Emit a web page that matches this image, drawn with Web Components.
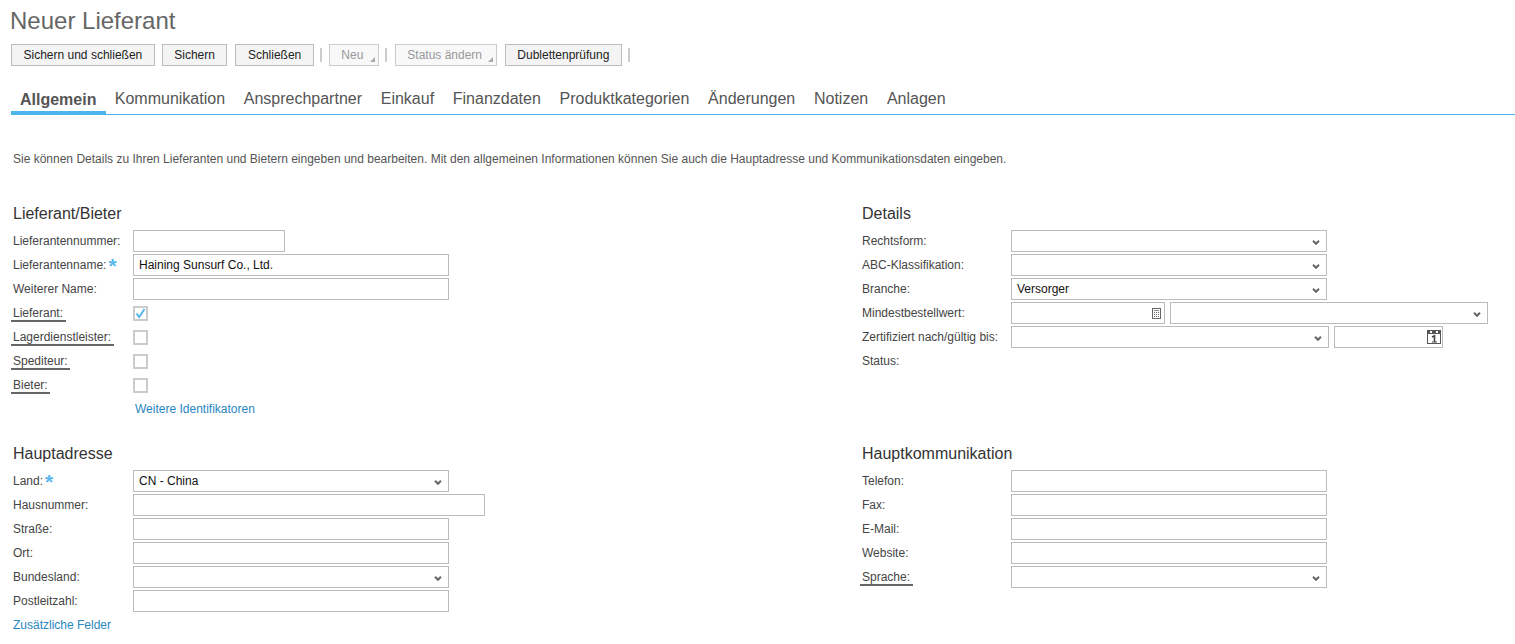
<!DOCTYPE html>
<html lang="de">
<head>
<meta charset="utf-8">
<title>Neuer Lieferant</title>
<style>
  html, body { margin: 0; background: #fff; overflow: hidden; }
  body { font: 12px "Liberation Sans", Arial, sans-serif; color: #444; }
</style>
</head>
<body>
<supplier-page>
  <tool-bar>
    <tool-button>Sichern und schließen</tool-button>
    <tool-button>Sichern</tool-button>
    <tool-button style="margin-left:1px">Schließen</tool-button>
    <tool-sep></tool-sep>
    <tool-button disabled menu style="--w:50px">Neu</tool-button>
    <tool-sep></tool-sep>
    <tool-button disabled menu style="--w:102px;margin-left:1px">Status ändern</tool-button>
    <tool-button style="margin-left:1px">Dublettenprüfung</tool-button>
    <tool-sep></tool-sep>
  </tool-bar>
  <tab-strip>
    <tab-item active>Allgemein</tab-item>
    <tab-item>Kommunikation</tab-item>
    <tab-item>Ansprechpartner</tab-item>
    <tab-item>Einkauf</tab-item>
    <tab-item>Finanzdaten</tab-item>
    <tab-item>Produktkategorien</tab-item>
    <tab-item>Änderungen</tab-item>
    <tab-item>Notizen</tab-item>
    <tab-item>Anlagen</tab-item>
  </tab-strip>
  <p slot="intro">Sie können Details zu Ihren Lieferanten und Bietern eingeben und bearbeiten. Mit den allgemeinen Informationen können Sie auch die Hauptadresse und Kommunikationsdaten eingeben.</p>

  <form-section slot="left-top" heading="Lieferant/Bieter" style="--label:120px">
    <form-row label="Lieferantennummer:"><text-box style="--w:152px"></text-box></form-row>
    <form-row label="Lieferantenname:" required><text-box value="Haining Sunsurf Co., Ltd."></text-box></form-row>
    <form-row label="Weiterer Name:"><text-box></text-box></form-row>
    <form-row label="Lieferant:" marked><check-box checked></check-box></form-row>
    <form-row label="Lagerdienstleister:" marked><check-box></check-box></form-row>
    <form-row label="Spediteur:" marked><check-box></check-box></form-row>
    <form-row label="Bieter:" marked><check-box></check-box></form-row>
    <form-row><link-text>Weitere Identifikatoren</link-text></form-row>
  </form-section>

  <form-section slot="right-top" heading="Details" style="--label:149px">
    <form-row label="Rechtsform:"><select-box></select-box></form-row>
    <form-row label="ABC-Klassifikation:"><select-box></select-box></form-row>
    <form-row label="Branche:"><select-box value="Versorger"></select-box></form-row>
    <form-row label="Mindestbestellwert:">
      <text-box style="--w:154px" icon="calc"></text-box>
      <select-box style="--w:318px"></select-box>
    </form-row>
    <form-row label="Zertifiziert nach/gültig bis:">
      <select-box style="--w:318px"></select-box>
      <text-box style="--w:109px" icon="date"></text-box>
    </form-row>
    <form-row label="Status:"></form-row>
  </form-section>

  <form-section slot="left-bottom" heading="Hauptadresse" style="--label:120px">
    <form-row label="Land:" required><select-box value="CN - China"></select-box></form-row>
    <form-row label="Hausnummer:"><text-box style="--w:352px"></text-box></form-row>
    <form-row label="Straße:"><text-box></text-box></form-row>
    <form-row label="Ort:"><text-box></text-box></form-row>
    <form-row label="Bundesland:"><select-box></select-box></form-row>
    <form-row label="Postleitzahl:"><text-box></text-box></form-row>
    <form-row flush><link-text>Zusätzliche Felder</link-text></form-row>
  </form-section>

  <form-section slot="right-bottom" heading="Hauptkommunikation" style="--label:149px">
    <form-row label="Telefon:"><text-box></text-box></form-row>
    <form-row label="Fax:"><text-box></text-box></form-row>
    <form-row label="E-Mail:"><text-box></text-box></form-row>
    <form-row label="Website:"><text-box></text-box></form-row>
    <form-row label="Sprache:" marked><select-box></select-box></form-row>
  </form-section>
</supplier-page>

<script>
// small helper, every element just sets its own shadow html once
function shadow(el, html) {
  el.attachShadow({ mode: 'open' });
  el.shadowRoot.innerHTML = html;
}

const CHEVRON = `<svg width="8" height="5" viewBox="0 0 8 5"><path d="M1 .8 L4 3.8 L7 .8" fill="none" stroke="#666" stroke-width="2"/></svg>`;

const ICONS = {
  calc: `<svg width="9" height="11" viewBox="0 0 9 11" style="margin-right:2px">
      <rect x=".5" y=".5" width="8" height="10" fill="#fff" stroke="#666"/>
      <rect x="2" y="2" width="5" height="1" fill="#888"/>
      <path d="M2 4.5h1M4 4.5h1M6 4.5h1M2 6.5h1M4 6.5h1M6 6.5h1M2 8.5h1M4 8.5h1M6 8.5h1" stroke="#666" stroke-width="1"/>
    </svg>`,
  date: `<svg width="14" height="14" viewBox="0 0 14 14">
      <rect x=".5" y=".5" width="13" height="13" fill="#fff" stroke="#555"/>
      <rect x="1" y="1" width="12" height="3" fill="#555"/>
      <rect x="3" y="1" width="2" height="2" fill="#fff"/>
      <rect x="9" y="1" width="2" height="2" fill="#fff"/>
      <path d="M5 7 L7.5 5.8 V12" fill="none" stroke="#444" stroke-width="1.6"/>
      <path d="M5 12 H10" fill="none" stroke="#444" stroke-width="1"/>
    </svg>`
};

class SupplierPage extends HTMLElement {
  connectedCallback() {
    shadow(this, `
      <style>
        :host { display: block; }
        h1 { margin: 0; padding: 7px 0 0 10px; font: 400 24px/27px "Liberation Sans", Arial, sans-serif; color: #666; }
        .intro { padding: 37px 13px 0; height: 85px; box-sizing: border-box; }
        .intro ::slotted(p) { margin: 0; font-size: 12px; line-height: 14px; color: #555; }
        .grid { display: grid; grid-template-columns: 849px 1fr; padding-left: 13px; grid-template-rows: 240px auto; }
      </style>
      <h1>Neuer Lieferant</h1>
      <slot></slot>
      <div class="intro"><slot name="intro"></slot></div>
      <div class="grid">
        <slot name="left-top"></slot>
        <slot name="right-top"></slot>
        <slot name="left-bottom"></slot>
        <slot name="right-bottom"></slot>
      </div>`);
  }
}

class ToolBar extends HTMLElement {
  connectedCallback() {
    shadow(this, `
      <style>
        :host { display: flex; align-items: center; gap: 7px; padding: 10px 0 0 11px; height: 22px; }
      </style>
      <slot></slot>`);
  }
}

class ToolButton extends HTMLElement {
  connectedCallback() {
    const disabled = this.hasAttribute('disabled');
    const menu = this.hasAttribute('menu');
    shadow(this, `
      <style>
        :host { display: block; position: relative; box-sizing: border-box; height: 22px; width: var(--w, auto);
          padding: 0 11.5px; border: 1px solid ${disabled ? '#ccc' : '#bbb'}; background: ${disabled ? '#f8f8f8' : '#f4f4f4'};
          font-size: 12px; line-height: 20px; white-space: nowrap; color: ${disabled ? '#999' : '#222'}; }
        i { position: absolute; right: 3px; bottom: 3px; width: 0; height: 0;
          border-left: 5px solid transparent; border-bottom: 5px solid #aaa; }
      </style>
      <slot></slot>${menu ? '<i></i>' : ''}`);
  }
}

class ToolSep extends HTMLElement {
  connectedCallback() {
    shadow(this, `<style>:host { display: block; width: 2px; height: 14px; background: #ccc; margin: 0 -.5px; }</style>`);
  }
}

class TabStrip extends HTMLElement {
  connectedCallback() {
    shadow(this, `
      <style>
        :host { display: flex; gap: 18.7px; margin: 14px 0 0 11px; height: 35px; box-sizing: border-box; border-bottom: 1px solid #4db5ee; }
      </style>
      <slot></slot>`);
  }
}

class TabItem extends HTMLElement {
  connectedCallback() {
    const active = this.hasAttribute('active');
    shadow(this, `
      <style>
        :host { display: block; box-sizing: border-box; height: 35px; padding-top: 9px;
          font-size: 16px; line-height: 19px; color: #555; white-space: nowrap; }
        :host([active]) { font-weight: 700; padding: 10px 9.6px 0 9px; margin-right: -10px; border-bottom: 4px solid #4db5ee; }
      </style>
      <slot></slot>`);
    if (active) this.setAttribute('aria-selected', 'true');
  }
}

class FormSection extends HTMLElement {
  connectedCallback() {
    shadow(this, `
      <style>
        :host { display: block; }
        h2 { margin: 0; height: 30px; font: 400 16px/18px "Liberation Sans", Arial, sans-serif; color: #333; padding-top: 5px; box-sizing: border-box; }
        .rows { display: flex; flex-direction: column; }
      </style>
      <h2>${this.getAttribute('heading')}</h2>
      <div class="rows"><slot></slot></div>`);
  }
}

class FormRow extends HTMLElement {
  connectedCallback() {
    const label = this.getAttribute('label');
    const star = this.hasAttribute('required') ? '<b>*</b>' : '';
    const flush = this.hasAttribute('flush');
    shadow(this, `
      <style>
        :host { display: flex; height: 24px; align-items: flex-start; }
        .lab { flex: none; width: ${flush ? '0' : 'var(--label)'}; font-size: 12px; line-height: 22px; color: #444; white-space: nowrap; }
        .txt { display: inline-block; }
        :host([marked]) .txt { margin-left: -2px; padding: 0 2.5px 0 2px; line-height: 22px; height: 18px; border-bottom: 2px solid #666; }
        b { color: #5ab7ee; font: 700 21px/0 "Liberation Sans", Arial, sans-serif; margin-left: 2px; position: relative; top: 4px; }
        .ctl { display: flex; gap: 5px; }
      </style>
      <div class="lab"><span class="txt">${label || ''}</span>${star}</div>
      <div class="ctl"><slot></slot></div>`);
  }
}

class TextBox extends HTMLElement {
  connectedCallback() {
    const value = this.getAttribute('value') || '';
    const icon = ICONS[this.getAttribute('icon')] || '';
    shadow(this, `
      <style>
        :host { display: flex; align-items: center; justify-content: space-between; box-sizing: border-box;
          width: var(--w, 316px); height: 22px; border: 1px solid #bbb; background: #fff; padding: 0 1px 0 5px;
          font-size: 12px; color: #111; }
        svg { display: block; }
      </style>
      <span>${value}</span>${icon}`);
  }
}

class SelectBox extends HTMLElement {
  connectedCallback() {
    const value = this.getAttribute('value') || '';
    shadow(this, `
      <style>
        :host { display: flex; align-items: center; justify-content: space-between; box-sizing: border-box;
          width: var(--w, 316px); height: 22px; border: 1px solid #bbb; background: #fff; padding: 0 6px 0 5px;
          font-size: 12px; color: #111; }
        svg { display: block; margin-top: 2px; }
      </style>
      <span>${value}</span>${CHEVRON}`);
  }
}

class CheckBox extends HTMLElement {
  connectedCallback() {
    const tick = this.hasAttribute('checked')
      ? `<svg width="11" height="11" viewBox="0 0 11 11"><path d="M1.5 5.5 L4.2 9 L9.5 1" fill="none" stroke="#5ab7ee" stroke-width="2"/></svg>`
      : '';
    shadow(this, `
      <style>
        :host { display: flex; align-items: center; justify-content: center; box-sizing: border-box;
          width: 15px; height: 15px; margin: 4px 0 0 0; border: 2px solid #ccc; background: #fff; }
        svg { display: block; }
      </style>
      ${tick}`);
  }
}

class LinkText extends HTMLElement {
  connectedCallback() {
    shadow(this, `
      <style>
        :host { display: block; font-size: 12px; line-height: 22px; color: #2a86bf; margin-left: 2px; }
        :host-context(form-row[flush]) { margin-left: 0; }
      </style>
      <slot></slot>`);
  }
}

customElements.define('supplier-page', SupplierPage);
customElements.define('tool-bar', ToolBar);
customElements.define('tool-button', ToolButton);
customElements.define('tool-sep', ToolSep);
customElements.define('tab-strip', TabStrip);
customElements.define('tab-item', TabItem);
customElements.define('form-section', FormSection);
customElements.define('form-row', FormRow);
customElements.define('text-box', TextBox);
customElements.define('select-box', SelectBox);
customElements.define('check-box', CheckBox);
customElements.define('link-text', LinkText);
</script>
</body>
</html>
